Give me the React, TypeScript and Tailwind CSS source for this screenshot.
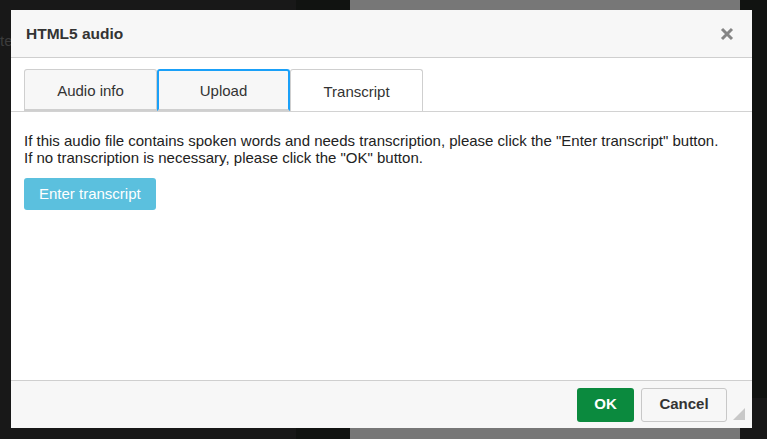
import React from "react";

export default function App() {
  return (
    <div className="relative w-[767px] h-[439px] overflow-hidden font-['Liberation_Sans',Arial,sans-serif]">
      {/* background page */}
      <div className="flex h-full w-full">
        <div className="w-[296px] h-full bg-[#181818]">
          <div className="pt-[32px] text-[15px] leading-[17px] text-[#3c3c3c]">te</div>
        </div>
        <div className="w-[54px] h-full bg-[#111311]" />
        <div className="w-[390px] h-full bg-[#777777]" />
        <div className="flex-1 h-full flex flex-col">
          <div className="h-[398px] bg-[#111311]" />
          <div className="flex-1 bg-[#181818]" />
        </div>
      </div>

      {/* dialog */}
      <div className="absolute left-[11px] top-[10px] w-[741px] h-[418px] bg-white flex flex-col">
        {/* header */}
        <div className="h-[48px] shrink-0 bg-[#f7f7f7] border-b border-[#cfcfcf] flex items-center justify-between pl-[15px] pr-[18px]">
          <div className="text-[15.5px] font-bold text-[#333333]">HTML5 audio</div>
          <svg width="14" height="14" viewBox="0 0 14 14" className="mt-[1px]">
            <path d="M2 2 L12 12 M12 2 L2 12" stroke="#858585" strokeWidth="3" strokeLinecap="butt" />
          </svg>
        </div>

        {/* tabs */}
        <div className="mt-[11px] px-[13px] flex border-b border-[#d2d2d2]">
          <div className="w-[133px] h-[42px] pt-[3px] bg-[#f7f7f7] border border-b-2 border-[#cfcfcf] rounded-t-[3px] flex items-center justify-center text-[15px] text-[#333333]">
            Audio info
          </div>
          <div className="w-[133px] h-[42px] pt-[2px] bg-[#f7f7f7] border-2 border-[#1aa0f8] border-b-[#cfcfcf] rounded-t-[3px] flex items-center justify-center text-[15px] text-[#333333]">
            Upload
          </div>
          <div className="w-[133px] h-[42px] pt-[3px] bg-white border border-b-0 border-[#cfcfcf] rounded-t-[3px] flex items-center justify-center text-[15px] text-[#333333]">
            Transcript
          </div>
        </div>

        {/* body */}
        <div className="flex-1 px-[13px] pt-[20px]">
          <p className="text-[15px] leading-[17px] text-[#222222]">
            If this audio file contains spoken words and needs transcription, please click the "Enter transcript" button.
            <br />
            If no transcription is necessary, please click the "OK" button.
          </p>
          <button className="mt-[12px] h-[32px] px-[15px] rounded-[3px] bg-[#5bc0de] text-white text-[15px]">
            Enter transcript
          </button>
        </div>

        {/* footer */}
        <div className="h-[48px] shrink-0 bg-[#f7f7f7] border-t border-[#cfcfcf] flex items-center justify-end gap-[7px] pr-[25px]">
          <button className="w-[57px] h-[34px] rounded-[3px] bg-[#0b8a3e] text-white text-[15px] font-bold">OK</button>
          <button className="w-[86px] h-[34px] rounded-[3px] bg-[#f7f7f7] border border-[#c8c8c8] text-[#333333] text-[15px] font-bold">
            Cancel
          </button>
        </div>

        {/* resize handle */}
        <svg width="12" height="12" viewBox="0 0 12 12" className="absolute right-[7px] bottom-[8px]">
          <path d="M12 0 L12 12 L0 12 Z" fill="#c8c8c8" />
        </svg>
      </div>
    </div>
  );
}
